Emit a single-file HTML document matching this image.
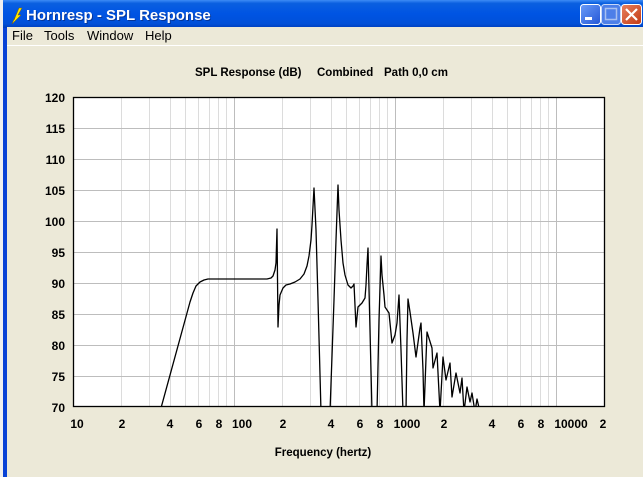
<!DOCTYPE html>
<html><head><meta charset="utf-8"><style>
html,body{margin:0;padding:0;width:643px;height:477px;overflow:hidden;background:#fff}
svg{display:block}
text{font-family:"Liberation Sans",sans-serif}
</style></head><body>
<svg width="643" height="477" viewBox="0 0 643 477" xmlns="http://www.w3.org/2000/svg">
<defs>
<linearGradient id="tb" x1="0" y1="0" x2="0" y2="1">
<stop offset="0" stop-color="#3d8cf5"/><stop offset="0.12" stop-color="#0a5fe0"/><stop offset="0.5" stop-color="#0054e3"/><stop offset="0.85" stop-color="#0150d8"/><stop offset="1" stop-color="#003dbb"/>
</linearGradient>
<linearGradient id="bb" x1="0" y1="0" x2="1" y2="1"><stop offset="0" stop-color="#6a9cf8"/><stop offset="1" stop-color="#2456d6"/></linearGradient>
<linearGradient id="cb" x1="0" y1="0" x2="1" y2="1"><stop offset="0" stop-color="#e8805e"/><stop offset="1" stop-color="#c23a14"/></linearGradient>
<clipPath id="pc"><rect x="73" y="97" width="532" height="310"/></clipPath>
</defs>
<rect x="0" y="0" width="4" height="477" fill="#f0f0f0"/>
<rect x="3" y="0" width="645" height="477" fill="#0842d6"/>
<rect x="3" y="0" width="645" height="28" fill="url(#tb)"/>
<rect x="7" y="27" width="640" height="450" fill="#ece9d8"/>
<path d="M14 20 L19 8 L22 8 L18 15 L21 15 L12 24 L15 17 Z" fill="#ffe800" stroke="#806000" stroke-width="0.5"/>
<text x="27" y="21" font-size="15" font-weight="bold" fill="#0a246a" opacity="0.6">Hornresp - SPL Response</text>
<text x="26" y="20" font-size="15" font-weight="bold" fill="#fff">Hornresp - SPL Response</text>
<rect x="580.5" y="4.5" width="20" height="20" rx="3" fill="url(#bb)" stroke="#fff"/>
<rect x="585" y="17" width="7" height="3" fill="#fff"/>
<rect x="601.5" y="4.5" width="19" height="20" rx="3" fill="#4d7fe8" stroke="#c8d8f8"/>
<rect x="605.5" y="8.5" width="11" height="11" fill="none" stroke="#a8c0f0" stroke-width="1.5"/>
<rect x="621.5" y="4.5" width="20" height="20" rx="3" fill="url(#cb)" stroke="#fff"/>
<path d="M626 9 L637 20 M637 9 L626 20" stroke="#fff" stroke-width="2.2"/>
<g font-size="13" fill="#000">
<text x="12" y="40">File</text><text x="44" y="40">Tools</text><text x="87" y="40">Window</text><text x="145" y="40">Help</text>
</g>
<line x1="7" y1="45.5" x2="643" y2="45.5" stroke="#fff"/>
<g font-size="11.5" font-weight="bold" fill="#000">
<text x="195" y="76">SPL Response (dB)</text><text x="317" y="76">Combined</text><text x="384" y="76">Path 0,0 cm</text>
</g>
<rect x="73" y="97" width="532" height="310" fill="#fff"/>
<g stroke="#dcdcdc" stroke-width="1">
<path d="M121.5 97V407M149.5 97V407M170.5 97V407M185.5 97V407M198.5 97V407M209.5 97V407M218.5 97V407M226.5 97V407
M282.5 97V407M310.5 97V407M331.5 97V407M346.5 97V407M359.5 97V407M370.5 97V407M379.5 97V407M387.5 97V407
M443.5 97V407M471.5 97V407M492.5 97V407M507.5 97V407M520.5 97V407M531.5 97V407M540.5 97V407M548.5 97V407"/>
</g>
<g stroke="#bdbdbd" stroke-width="1">
<path d="M234.5 97V407M395.5 97V407M556.5 97V407"/>
<path d="M73 128.5H605M73 159.5H605M73 190.5H605M73 221.5H605M73 252.5H605M73 283.5H605M73 314.5H605M73 345.5H605M73 376.5H605"/>
</g>
<polyline clip-path="url(#pc)" fill="none" stroke="#000" stroke-width="1.3" stroke-linejoin="round" points="
161,408 187,313 190,302 193,293 196,286 200,282 204,280 208,279 267,279 271,278 273,276 275,270 276,263 277,229 278,327 279,305 280,295 283,288 286,285 290,284 295,282 300,279 304,274 307,266 309,256 311,240 312,225 314,188 316,230 318,300 321,412
330,412 334,300 336,240 338,185 339,210 341,240 343,263 345,275 348,285 351,288 353,286 354,284 356,327 358,307 362,303 365,298 366,285 367,265 368,248 370,330 372,412
377,412 379,320 381,256 382,275 384,295 385,307 389,313 392,343 395,335 397,323 399,295 401,350 403,412
406,412 407,340 408,299 410,312 413,333 416,357 420,328 421,323 423,370 424,412 427,332 432,348 433,368 437,353 440,412 443,357 446,380 450,363 452,397 456,373 460,393 462,378 464,412 467,387 470,402 472,393 475,412 477,399 480,412"/>
<rect x="73.5" y="97.5" width="531" height="309" fill="none" stroke="#000" stroke-width="1.3"/>
<g font-size="12" font-weight="bold" fill="#000" text-anchor="end">
<text x="65" y="102">120</text><text x="65" y="133">115</text><text x="65" y="164">110</text><text x="65" y="195">105</text><text x="65" y="226">100</text><text x="65" y="257">95</text><text x="65" y="288">90</text><text x="65" y="319">85</text><text x="65" y="350">80</text><text x="65" y="381">75</text><text x="65" y="412">70</text>
</g>
<g font-size="12" font-weight="bold" fill="#000" text-anchor="middle">
<text x="77" y="428">10</text><text x="122" y="428">2</text><text x="170" y="428">4</text><text x="199" y="428">6</text><text x="219" y="428">8</text><text x="242" y="428">100</text>
<text x="283" y="428">2</text><text x="331" y="428">4</text><text x="360" y="428">6</text><text x="380" y="428">8</text><text x="407" y="428">1000</text>
<text x="444" y="428">2</text><text x="492" y="428">4</text><text x="521" y="428">6</text><text x="541" y="428">8</text><text x="571" y="428">10000</text><text x="603" y="428">2</text>
</g>
<text x="323" y="456" font-size="11.5" font-weight="bold" text-anchor="middle" fill="#000">Frequency (hertz)</text>
</svg>
</body></html>
